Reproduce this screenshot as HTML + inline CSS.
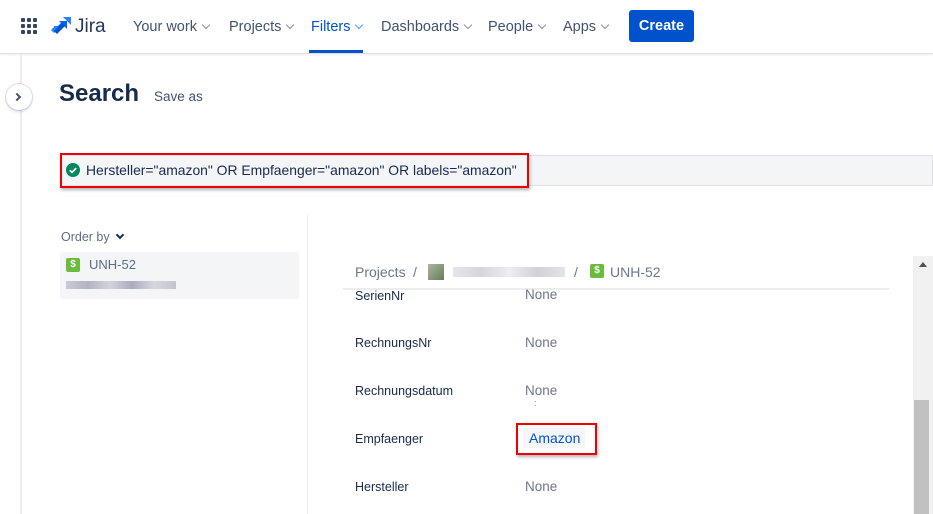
<!DOCTYPE html>
<html><head><style>
*{margin:0;padding:0;box-sizing:border-box}
body{width:933px;height:514px;overflow:hidden;background:#fff;font-family:"Liberation Sans",sans-serif;color:#172b4d;position:relative}
.a{position:absolute;white-space:nowrap}
.nav{font-size:14.5px;color:#42526e;top:18px}
.chev{display:inline-block;width:6px;height:6px;border-right:1.5px solid #8993a4;border-bottom:1.5px solid #8993a4;transform:rotate(45deg);margin-left:6px;position:relative;top:-3px}
.lbl{font-size:12.5px;color:#172b4d;left:355px}
.val{font-size:13.5px;color:#6b778c;left:525px}
</style></head><body>
<div class="a" style="left:0;top:0;width:933px;height:54px;border-bottom:1px solid #dfe1e6;box-shadow:0 1px 2px rgba(9,30,66,.08)"></div>
<svg class="a" style="left:21px;top:18px" width="16" height="16" viewBox="0 0 16 16" fill="#344563">
<rect x="0" y="0" width="4" height="4" rx="1"/><rect x="6" y="0" width="4" height="4" rx="1"/><rect x="12" y="0" width="4" height="4" rx="1"/>
<rect x="0" y="6" width="4" height="4" rx="1"/><rect x="6" y="6" width="4" height="4" rx="1"/><rect x="12" y="6" width="4" height="4" rx="1"/>
<rect x="0" y="12" width="4" height="4" rx="1"/><rect x="6" y="12" width="4" height="4" rx="1"/><rect x="12" y="12" width="4" height="4" rx="1"/></svg>
<svg class="a" style="left:51px;top:17px" width="20" height="19" viewBox="0 0 20 19"><path d="M12 0h8v8z" fill="#2684ff"/><path d="M8 4h8v8l-3-3-6 6-3-3 6-6z" fill="#0065ff"/><path d="M3 9h7l-7 7-3-3 3-3z" fill="#2684ff"/><path d="M8 9l3-3 3 3-8 8-3-3z" fill="#0052cc"/></svg>
<div class="a" style="left:75px;top:16px;font-size:19px;color:#253858">Jira</div>
<div class="a nav" style="left:133px;top:19px">Your work<span class="chev"></span></div>
<div class="a nav" style="left:229px;top:19px">Projects<span class="chev"></span></div>
<div class="a nav" style="left:311px;top:19px;color:#0052cc">Filters<span class="chev" style="border-color:#4c9aff"></span></div>
<div class="a" style="left:309px;top:50px;width:54px;height:3px;background:#0052cc"></div>
<div class="a nav" style="left:381px;top:19px">Dashboards<span class="chev"></span></div>
<div class="a nav" style="left:488px;top:19px">People<span class="chev"></span></div>
<div class="a nav" style="left:563px;top:19px">Apps<span class="chev"></span></div>
<div class="a" style="left:629px;top:10px;width:65px;height:32px;background:#0052cc;border-radius:3px;color:#fff;font-size:14.5px;font-weight:bold;text-align:center;line-height:32px">Create</div>

<div class="a" style="left:20px;top:54px;width:2px;height:460px;background:#ebecf0"></div>
<div class="a" style="left:6px;top:84px;width:26px;height:26px;border-radius:50%;background:#fff;box-shadow:0 0 0 1px rgba(9,30,66,.12),0 2px 3px rgba(9,30,66,.15)"></div>
<div class="a" style="left:14px;top:94px;width:6px;height:6px;border-right:2px solid #42526e;border-top:2px solid #42526e;transform:rotate(45deg)"></div>
<div class="a" style="left:59px;top:80px;font-size:24px;font-weight:bold;color:#172b4d">Search</div>
<div class="a" style="left:154px;top:89px;font-size:13.5px;color:#42526e">Save as</div>

<div class="a" style="left:60px;top:155px;width:873px;height:31px;background:#f4f5f7;border:1px solid #dfe1e6"></div>
<div class="a" style="left:60px;top:153px;width:469px;height:35px;border:2px solid #e00;box-shadow:1px 2px 3px rgba(0,0,0,.3)"></div>
<svg class="a" style="left:66px;top:163px" width="14" height="14"><circle cx="7" cy="7" r="7" fill="#00875a"/><path d="M3.8 7.2l2.2 2.2 4.2-4.3" stroke="#fff" stroke-width="1.8" fill="none"/></svg>
<div class="a" style="left:86px;top:162px;font-size:13.9px;color:#172b4d">Hersteller="amazon" OR Empfaenger="amazon" OR labels="amazon"</div>

<div class="a" style="left:61px;top:230px;font-size:12.5px;color:#5e6c84">Order by</div>
<div class="a" style="left:117px;top:232px;width:6px;height:6px;border-right:2px solid #172b4d;border-bottom:2px solid #172b4d;transform:rotate(45deg)"></div>
<div class="a" style="left:60px;top:252px;width:239px;height:47px;background:#f4f5f7;border-radius:3px"></div>
<div class="a" style="left:66px;top:258px;width:14px;height:14px;background:#6bbb3c;border-radius:2px;color:#fff;font-size:10px;font-weight:bold;text-align:center;line-height:14px">$</div>
<div class="a" style="left:89px;top:257px;font-size:13px;color:#5e6c84">UNH-52</div>
<div class="a" style="left:66px;top:281px;width:110px;height:8px;background:linear-gradient(90deg,#c8ccd6,#b0b4c4,#d2d4dc,#a8acbe,#d6d8e0,#c0c4ce)"></div>
<div class="a" style="left:307px;top:215px;width:1px;height:299px;background:#ebecf0"></div>

<div class="a" style="left:355px;top:264px;font-size:14px;color:#6b778c">Projects</div>
<div class="a" style="left:413px;top:264px;font-size:14px;color:#6b778c">/</div>
<div class="a" style="left:428px;top:264px;width:16px;height:16px;background:linear-gradient(135deg,#a8b8a0,#6a7a58)"></div>
<div class="a" style="left:453px;top:267px;width:112px;height:10px;background:linear-gradient(90deg,#e4e6ea,#d4d6dc,#eceef0,#d0d2d8,#e2e4e8)"></div>
<div class="a" style="left:574px;top:264px;font-size:14px;color:#6b778c">/</div>
<div class="a" style="left:590px;top:264px;width:14px;height:14px;background:#6bbb3c;border-radius:2px;color:#fff;font-size:10px;font-weight:bold;text-align:center;line-height:14px">$</div>
<div class="a" style="left:610px;top:264px;font-size:14px;color:#6b778c">UNH-52</div>
<div class="a" style="left:343px;top:288px;width:546px;height:2px;background:#ebecf0"></div>

<div class="a lbl" style="top:289px">SerienNr</div><div class="a val" style="top:287px">None</div>
<div class="a lbl" style="top:336px">RechnungsNr</div><div class="a val" style="top:335px">None</div>
<div class="a lbl" style="top:384px">Rechnungsdatum</div><div class="a val" style="top:383px">None</div>
<div class="a" style="left:534px;top:398px;font-size:9px;color:#6b778c">:</div>
<div class="a lbl" style="top:432px">Empfaenger</div>
<div class="a" style="left:523px;top:428px;width:62px;height:20px;background:#f4f5f7"></div>
<div class="a" style="left:529px;top:430px;font-size:14px;color:#0052cc">Amazon</div>
<div class="a" style="left:516px;top:423px;width:81px;height:32px;border:2px solid #e00;box-shadow:1px 2px 3px rgba(0,0,0,.3)"></div>
<div class="a lbl" style="top:480px">Hersteller</div><div class="a val" style="top:479px">None</div>

<div class="a" style="left:913px;top:256px;width:20px;height:258px;background:#f1f1f1"></div>
<div class="a" style="left:919px;top:262px;width:0;height:0;border-left:4px solid transparent;border-right:4px solid transparent;border-bottom:5px solid #505050"></div>
<div class="a" style="left:914px;top:400px;width:15px;height:114px;background:#c1c1c1"></div>
</body></html>
